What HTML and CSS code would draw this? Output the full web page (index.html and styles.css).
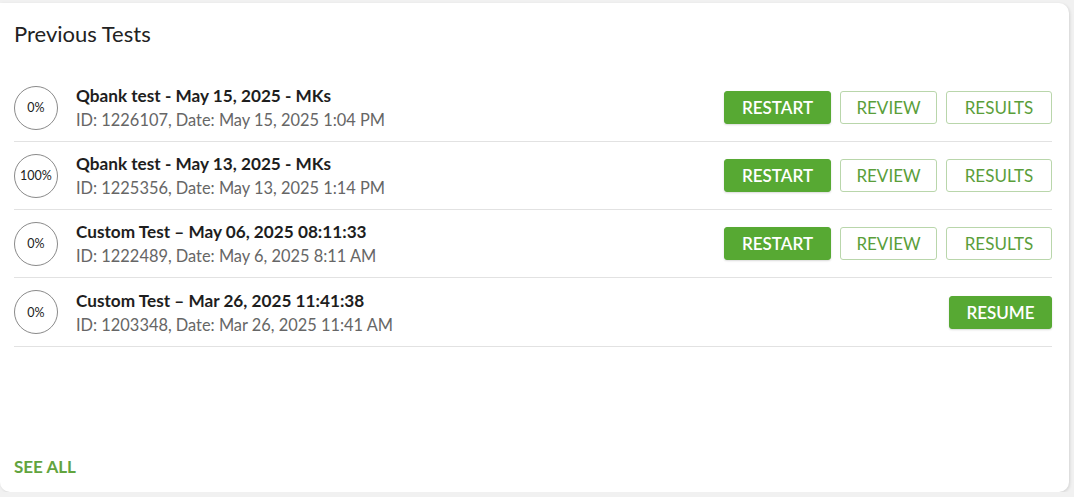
FILE: index.html
```html
<!DOCTYPE html>
<html>
<head>
<meta charset="utf-8">
<link rel="stylesheet" href="styles.css">
</head>
<body>
<div class="card">
  <h2 class="title">Previous Tests</h2>
  <div class="list">
    <div class="row">
      <div class="pct">0%</div>
      <div class="info">
        <div class="name">Qbank test - May 15, 2025 - MKs</div>
        <div class="meta">ID: 1226107, Date: May 15, 2025 1:04 PM</div>
      </div>
      <div class="actions">
        <button class="btn solid restart">RESTART</button>
        <button class="btn outline review">REVIEW</button>
        <button class="btn outline results">RESULTS</button>
      </div>
    </div>
    <div class="row">
      <div class="pct">100%</div>
      <div class="info">
        <div class="name">Qbank test - May 13, 2025 - MKs</div>
        <div class="meta">ID: 1225356, Date: May 13, 2025 1:14 PM</div>
      </div>
      <div class="actions">
        <button class="btn solid restart">RESTART</button>
        <button class="btn outline review">REVIEW</button>
        <button class="btn outline results">RESULTS</button>
      </div>
    </div>
    <div class="row">
      <div class="pct">0%</div>
      <div class="info">
        <div class="name">Custom Test – May 06, 2025 08:11:33</div>
        <div class="meta">ID: 1222489, Date: May 6, 2025 8:11 AM</div>
      </div>
      <div class="actions">
        <button class="btn solid restart">RESTART</button>
        <button class="btn outline review">REVIEW</button>
        <button class="btn outline results">RESULTS</button>
      </div>
    </div>
    <div class="row">
      <div class="pct">0%</div>
      <div class="info">
        <div class="name">Custom Test – Mar 26, 2025 11:41:38</div>
        <div class="meta">ID: 1203348, Date: Mar 26, 2025 11:41 AM</div>
      </div>
      <div class="actions">
        <button class="btn solid resume">RESUME</button>
      </div>
    </div>
  </div>
  <a class="see-all" href="#">SEE ALL</a>
</div>
</body>
</html>
```
FILE: styles.css
```css
html, body {
  margin: 0;
  padding: 0;
  background: #f1f1f1;
  font-family: "Lato", "Open Sans", sans-serif;
}
.card {
  box-sizing: border-box;
  width: 1069px;
  height: 489px;
  margin-top: 3px;
  background: #fff;
  border-radius: 0 10px 10px 10px;
  box-shadow: 1px 1px 3px rgba(0,0,0,0.12);
  padding: 0 17px 0 14px;
  display: flex;
  flex-direction: column;
}
.title {
  margin: 0;
  padding-top: 18px;
  height: 71px;
  box-sizing: border-box;
  font-size: 22px;
  font-weight: 400;
  line-height: 26px;
  color: #222;
}
.list {
  display: flex;
  flex-direction: column;
}
.row {
  height: 68px;
  box-sizing: border-box;
  border-bottom: 1px solid #e2e2e2;
  display: flex;
  align-items: center;
}
.row:last-child {
  height: 69px;
}
.pct {
  width: 44px;
  height: 44px;
  box-sizing: border-box;
  border: 1px solid #8a8a8a;
  border-radius: 50%;
  display: flex;
  align-items: center;
  justify-content: center;
  font-size: 12.5px;
  color: #222;
  flex: none;
}
.info {
  margin-left: 18px;
  flex: 1;
  display: flex;
  flex-direction: column;
  gap: 3px;
}
.name {
  font-size: 17.2px;
  font-weight: 700;
  color: #1e1e1e;
  line-height: 21px;
}
.meta {
  font-size: 16.4px;
  color: #666;
  line-height: 21px;
}
.actions {
  display: flex;
  gap: 9px;
}
.btn {
  height: 33px;
  box-sizing: border-box;
  border-radius: 3px;
  font-family: inherit;
  font-size: 17px;
  padding: 0;
  cursor: pointer;
}
.solid {
  background: #57a933;
  border: 1px solid #57a933;
  color: #fff;
  font-weight: 600;
  box-shadow: 0 1px 2px rgba(0,0,0,0.15);
}
.outline {
  background: #fff;
  border: 1px solid #b9d6ab;
  color: #5a9e3a;
}
.restart { width: 107px; }
.review { width: 97px; }
.results { width: 106px; }
.resume { width: 103px; }
.see-all {
  margin-top: auto;
  margin-bottom: 15px;
  font-size: 17px;
  font-weight: 700;
  color: #62a43e;
  text-decoration: none;
  line-height: 20px;
}
```
